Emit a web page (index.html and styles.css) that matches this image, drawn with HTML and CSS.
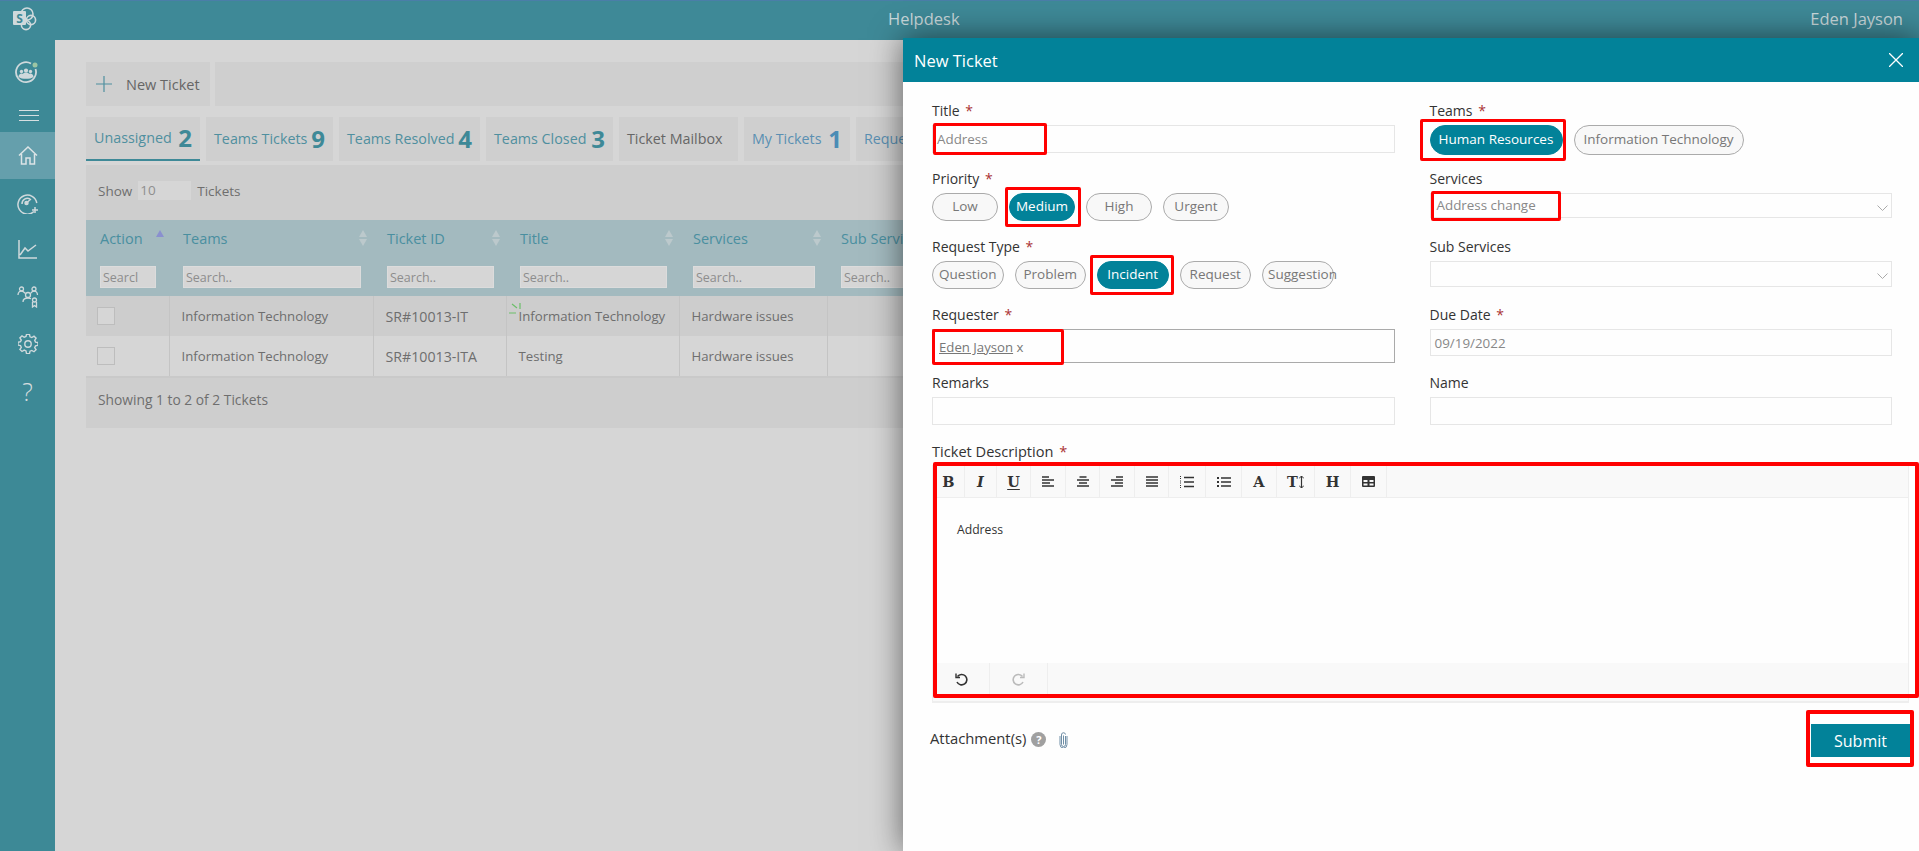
FILE: index.html
```html
<!DOCTYPE html>
<html lang="en">
<head>
  <meta charset="UTF-8" />
  <title>Helpdesk</title>
  <link rel="stylesheet" href="styles.css">
</head>
<body>
  <header class="topbar">
    <svg class="logo" width="26" height="26" viewBox="0 0 26 26">
      <circle cx="16" cy="8" r="6" fill="none" stroke="#cfd9dc" stroke-width="1.6"/>
      <circle cx="20" cy="14" r="4.6" fill="none" stroke="#cfd9dc" stroke-width="1.6"/>
      <circle cx="15" cy="19" r="4.6" fill="none" stroke="#cfd9dc" stroke-width="1.6"/>
      <rect x="2" y="5" width="13" height="14" rx="1" fill="#cfd9dc"/>
      <text x="8.5" y="16.5" class="logo-s">S</text>
    </svg>
    <div class="app-name">Helpdesk</div>
    <div class="user-name">Eden Jayson</div>
  </header>

  <div class="shell">
    <nav class="sidebar">
      <div class="side-item side-team">
        <svg width="24" height="24" viewBox="0 0 24 24" fill="none" stroke="#cfd9dc">
          <path d="M17 2.500A10 10 0 1 0 21.500 8" stroke-width="1.800"/>
          <g fill="#cfd9dc" stroke="none">
            <circle cx="7.500" cy="10.500" r="1.700"/>
            <circle cx="16.500" cy="10.500" r="1.700"/>
            <circle cx="12" cy="9.500" r="2.100"/>
            <path d="M4.500 16c0-2.300 1.500-3.500 3-3.500.6 0 1 .1 1.400.4.7-.8 1.800-1.300 3.100-1.300s2.400.5 3.100 1.300c.4-.3.8-.4 1.400-.4 1.500 0 3 1.200 3 3.500-1.700 1.300-4.500 1.800-7.500 1.800s-5.800-.5-7.500-1.800z"/>
          </g>
          <circle cx="21" cy="4" r="2.500" fill="#9cc6a4" stroke="none"/>
        </svg>
      </div>
      <div class="side-item side-menu">
        <svg width="20" height="11" viewBox="0 0 20 11" stroke="#d6dfe1"><path d="M0 .5h20M0 5.500h20M0 10.500h20"/></svg>
      </div>
      <div class="side-item active">
        <svg width="20" height="19" viewBox="0 0 20 19" fill="none" stroke="#dce4e6" stroke-width="1.500"><path d="M1 9.500 10 1l9 8.500M3.500 8v10h4.500v-6h4v6h4.500V8"/></svg>
      </div>
      <div class="side-item">
        <svg width="22" height="22" viewBox="0 0 22 22" fill="none" stroke="#cfd9dc" stroke-width="1.500">
          <path d="M17 19.500A9.500 9.500 0 1 1 19.800 11"/>
          <path d="M5 12a5.500 5.500 0 0 1 8-5"/>
          <circle cx="9.500" cy="11" r="1.500" fill="#cfd9dc"/>
          <path d="M10.500 10 14 7M18 15v6M15 18h6"/>
        </svg>
      </div>
      <div class="side-item">
        <svg width="20" height="19" viewBox="0 0 20 19" fill="none" stroke="#cfd9dc" stroke-width="1.500"><path d="M1 0v18h18M2 15l5-7 3 3 8-6"/></svg>
      </div>
      <div class="side-item">
        <svg width="22" height="22" viewBox="0 0 22 22" fill="none" stroke="#cfd9dc" stroke-width="1.300">
          <circle cx="4.500" cy="3" r="2"/><circle cx="17" cy="3" r="2"/><circle cx="11" cy="9" r="2.500"/><circle cx="17.500" cy="14" r="2"/>
          <path d="M1 9c0-3 2-4 3.500-4S7 6 8.500 7.500M20.500 9c0-3-2-4-3.500-4s-2.500 1-3.500 2.500M6 16c0-2.500 2-4 5-4 1 0 2 .2 3 .8M15.500 16v5l2-1.500 2 1.500v-5"/>
        </svg>
      </div>
      <div class="side-item">
        <svg width="20" height="20" viewBox="0 0 20 20" fill="none" stroke="#cfd9dc" stroke-width="1.400">
          <circle cx="10" cy="10" r="3.200"/>
          <path d="M8.500 1h3l.5 2.500 1.800.8L16 2.900l2.100 2.100-1.400 2.200.8 1.800 2.500.5v3l-2.500.5-.8 1.800 1.400 2.200-2.100 2.100-2.200-1.400-1.800.8-.5 2.500h-3L8 18.200l-1.800-.8L4 18.800 1.900 16.700l1.400-2.200-.8-1.800L0 12.200v-3l2.500-.5.800-1.800L1.900 4.700 4 2.600l2.200 1.400L8 3.200z" transform="translate(0 -.6) scale(1 .96)"/>
        </svg>
      </div>
      <div class="side-item side-help">?</div>
    </nav>

    <main class="content">
      <div class="toolbar">
        <div class="new-btn">
          <svg width="16" height="16" viewBox="0 0 16 16" stroke="#4f8f9f" stroke-width="1.200"><path d="M8 0v16M0 8h16"/></svg>
          New Ticket
        </div>
        <div class="toolbar-rest"></div>
      </div>

      <div class="tabs">
        <div class="tab tab-active">Unassigned <b>2</b></div>
        <div class="tab">Teams Tickets <b>9</b></div>
        <div class="tab">Teams Resolved <b>4</b></div>
        <div class="tab">Teams Closed <b>3</b></div>
        <div class="tab tab-plain">Ticket Mailbox</div>
        <div class="tab tab-blue">My Tickets <b>1</b></div>
        <div class="tab tab-blue">Requests <b>0</b></div>
      </div>

      <section class="card">
        <div class="show-row">Show <span class="show-box">10</span> Tickets</div>
        <table class="grid">
          <colgroup>
            <col class="col-action"><col class="col-teams"><col class="col-id"><col class="col-title"><col class="col-services"><col class="col-sub">
          </colgroup>
          <thead>
            <tr class="head-row">
              <th><span class="th-in">Action <i class="sort-asc"></i></span></th>
              <th><span class="th-in">Teams <i class="sort"></i></span></th>
              <th><span class="th-in">Ticket ID <i class="sort"></i></span></th>
              <th><span class="th-in">Title <i class="sort"></i></span></th>
              <th><span class="th-in">Services <i class="sort"></i></span></th>
              <th><span class="th-in">Sub Services <i class="sort"></i></span></th>
            </tr>
            <tr class="search-row">
              <th><span class="search">Searcl</span></th>
              <th><span class="search">Search..</span></th>
              <th><span class="search">Search..</span></th>
              <th><span class="search">Search..</span></th>
              <th><span class="search">Search..</span></th>
              <th><span class="search">Search..</span></th>
            </tr>
          </thead>
          <tbody>
            <tr class="odd">
              <td><span class="check"></span></td>
              <td>Information Technology</td>
              <td class="id-cell">SR#10013-IT</td>
              <td class="new-cell">
                <svg class="new-mark" width="12" height="12" viewBox="0 0 12 12" stroke="#6cbf6a" stroke-width="1.200"><path d="M11 0v6M3 1l5 4M0 10h7"/></svg>
                Information Technology
              </td>
              <td>Hardware issues</td>
              <td></td>
            </tr>
            <tr>
              <td><span class="check"></span></td>
              <td>Information Technology</td>
              <td class="id-cell">SR#10013-ITA</td>
              <td>Testing</td>
              <td>Hardware issues</td>
              <td></td>
            </tr>
          </tbody>
        </table>
        <div class="grid-foot">Showing 1 to 2 of 2 Tickets</div>
      </section>
    </main>
  </div>

  <aside class="panel">
    <div class="panel-head">
      <span>New Ticket</span>
      <svg width="14" height="14" viewBox="0 0 14 14" stroke="#fff" stroke-width="1.300"><path d="M0 0l14 14M14 0 0 14"/></svg>
    </div>

    <form class="form">
      <div class="fields">
        <div class="field">
          <label>Title <em>*</em></label>
          <div class="input">Address</div>
        </div>
        <div class="field">
          <label>Priority <em>*</em></label>
          <div class="pills">
            <span class="pill pill-p">Low</span>
            <span class="pill pill-p on">Medium</span>
            <span class="pill pill-p">High</span>
            <span class="pill pill-p">Urgent</span>
          </div>
        </div>
        <div class="field">
          <label>Request Type <em>*</em></label>
          <div class="pills">
            <span class="pill pill-r">Question</span>
            <span class="pill pill-r">Problem</span>
            <span class="pill pill-r on">Incident</span>
            <span class="pill pill-r">Request</span>
            <span class="pill pill-r">Suggestion</span>
          </div>
        </div>
        <div class="field">
          <label>Requester <em>*</em></label>
          <div class="input input-people"><u>Eden Jayson</u>&nbsp;x</div>
        </div>
        <div class="field">
          <label>Remarks</label>
          <div class="input input-low"></div>
        </div>

        <div class="field">
          <label>Teams <em>*</em></label>
          <div class="pills">
            <span class="pill pill-t on">Human Resources</span>
            <span class="pill pill-t">Information Technology</span>
          </div>
        </div>
        <div class="field">
          <label>Services</label>
          <div class="input input-select">Address change
            <svg width="11" height="6" viewBox="0 0 11 6" fill="none" stroke="#aaa"><path d="M.5.5l5 5 5-5"/></svg>
          </div>
        </div>
        <div class="field">
          <label>Sub Services</label>
          <div class="input input-select input-sub">
            <svg width="11" height="6" viewBox="0 0 11 6" fill="none" stroke="#aaa"><path d="M.5.5l5 5 5-5"/></svg>
          </div>
        </div>
        <div class="field">
          <label>Due Date <em>*</em></label>
          <div class="input input-date">09/19/2022</div>
        </div>
        <div class="field">
          <label>Name</label>
          <div class="input input-low"></div>
        </div>
      </div>

      <label class="desc-label">Ticket Description <em>*</em></label>
      <div class="editor">
        <div class="ed-tools">
          <span class="tool glyph">B</span>
          <span class="tool glyph glyph-i">I</span>
          <span class="tool glyph glyph-u">U</span>
          <span class="tool"><svg width="12" height="11" viewBox="0 0 12 11" stroke="#333" stroke-width="1.400"><path d="M0 1h7M0 4h12M0 7h8M0 10h12"/></svg></span>
          <span class="tool"><svg width="12" height="11" viewBox="0 0 12 11" stroke="#333" stroke-width="1.400"><path d="M2.500 1h7M0 4h12M2 7h8M0 10h12"/></svg></span>
          <span class="tool"><svg width="12" height="11" viewBox="0 0 12 11" stroke="#333" stroke-width="1.400"><path d="M5 1h7M0 4h12M4 7h8M0 10h12"/></svg></span>
          <span class="tool"><svg width="12" height="11" viewBox="0 0 12 11" stroke="#333" stroke-width="1.400"><path d="M0 1h12M0 4h12M0 7h12M0 10h12"/></svg></span>
          <span class="tool"><svg width="14" height="12" viewBox="0 0 14 12" stroke="#333"><path d="M4 1.500h10M4 6h10M4 10.500h10" stroke-width="1.600"/><path d="M.5 0v3M.5 4.500v3M.5 9v3" stroke-width="1" stroke-dasharray="1 1"/></svg></span>
          <span class="tool"><svg width="14" height="10" viewBox="0 0 14 10" stroke="#333"><path d="M4 1h10M4 5h10M4 9h10" stroke-width="1.600"/><path d="M0 1h2M0 5h2M0 9h2" stroke-width="2"/></svg></span>
          <span class="tool glyph">A</span>
          <span class="tool glyph glyph-t">T<svg width="5" height="12" viewBox="0 0 5 12" stroke="#333"><path d="M2.500 0v12" stroke-width="1.200"/><path d="M0 2.500 2.500 0 5 2.500M0 9.500 2.500 12 5 9.500" fill="none"/></svg></span>
          <span class="tool glyph">H</span>
          <span class="tool"><svg width="13" height="11" viewBox="0 0 13 11"><path d="M1 0h11a1 1 0 0 1 1 1v9a1 1 0 0 1-1 1H1a1 1 0 0 1-1-1V1a1 1 0 0 1 1-1zm.5 4v2h4V4zm6 0v2h4V4zm-6 3.500V9.500h4v-2zm6 0V9.500h4v-2z" fill="#333" fill-rule="evenodd"/></svg></span>
        </div>
        <div class="ed-body">Address</div>
        <div class="ed-foot">
          <span class="tool"><svg width="13" height="13" viewBox="0 0 13 13" fill="none" stroke="#333" stroke-width="1.600"><path d="M2.500 3.500A5.200 5.200 0 1 1 2 9"/><path d="M1 .5v4h4" stroke-width="1.400"/></svg></span>
          <span class="tool"><svg width="13" height="13" viewBox="0 0 13 13" fill="none" stroke="#bbb" stroke-width="1.600"><path d="M10.500 3.500A5.200 5.200 0 1 0 11 9"/><path d="M12 .5v4H8" stroke-width="1.400"/></svg></span>
        </div>
      </div>

      <div class="form-foot">
        <div class="attach">
          Attachment(s)
          <span class="help-dot">?</span>
          <svg width="9" height="16" viewBox="0 0 9 16" fill="none" stroke="#6f8ea6" stroke-width="1"><path d="M6.500 4v8.500a2 2 0 0 1-4 0V3a2 2 0 0 1 4-.5M4.500 3.500v9"/><path d="M8 4v8.500a3.500 3.500 0 0 1-7 0V4"/></svg>
        </div>
        <button type="button" class="submit">Submit</button>
      </div>
    </form>

    <div class="mark mark-title"></div>
    <div class="mark mark-medium"></div>
    <div class="mark mark-incident"></div>
    <div class="mark mark-requester"></div>
    <div class="mark mark-teams"></div>
    <div class="mark mark-services"></div>
    <div class="mark mark-editor"></div>
    <div class="mark mark-submit"></div>
  </aside>
</body>
</html>
```

FILE: styles.css
```css
/* Reset & Base */
* {
  margin: 0;
  padding: 0;
  box-sizing: border-box;
}

html, body {
  height: 851px;
  overflow: hidden;
}

body {
  background-color: #d6d6d6;
  color: #666;
  font-family: "Open Sans", sans-serif;
  font-size: 13px;
  position: relative;
}

/* Top bar */
.topbar {
  height: 40px;
  background-color: #3e8997;
  border-top: 1px solid #4a7ea8;
  display: flex;
  align-items: center;
  position: relative;
  color: #c9d8db;
  font-size: 16.500px;
}

.logo {
  margin: -3px 0 0 11px;
}

.logo-s {
  font-family: "Open Sans", sans-serif;
  font-weight: 700;
  font-size: 12px;
  fill: #3e8997;
  text-anchor: middle;
}

.app-name {
  position: absolute;
  left: 888px;
  top: 6px;
}

.user-name {
  margin-left: auto;
  margin-right: 16px;
  margin-top: -5px;
}

.shell {
  display: flex;
  height: 811px;
}

/* Sidebar */
.sidebar {
  width: 55px;
  flex: none;
  background-color: #3d8996;
  display: flex;
  flex-direction: column;
}

.side-item {
  height: 47px;
  display: flex;
  align-items: center;
  justify-content: center;
  color: #d4dcde;
}

.side-team { height: 56px; padding: 10px 4px 0 0; }
.side-menu { height: 36px; padding: 2px 0 0 2px; }
.side-item.active { background-color: #659fac; }
.side-help { font-size: 25px; font-weight: 300; }

/* Main content */
.content {
  flex: 1;
  min-width: 0;
  padding: 22px 0 0 31px;
  overflow: hidden;
}

.toolbar {
  display: flex;
  gap: 5px;
  height: 44px;
}

.new-btn {
  width: 124px;
  flex: none;
  background-color: #cfcfcf;
  display: flex;
  align-items: center;
  gap: 14px;
  padding-left: 10px;
  font-size: 14.500px;
  color: #666;
}

.toolbar-rest {
  flex: 1;
  background-color: #cfcfcf;
}

.tabs {
  display: grid;
  grid-template-columns: 114px 127px 141px 127px 119px 106px 200px;
  gap: 6px;
  margin-top: 11px;
  white-space: nowrap;
  overflow: hidden;
}

.tab {
  height: 44px;
  background-color: #cfcfcf;
  padding: 0 8px 2px;
  display: flex;
  align-items: center;
  justify-content: space-between;
  font-size: 14.300px;
  color: #4f8f9f;
}

.tab b {
  font-size: 24px;
  font-weight: 700;
  color: #3e8997;
}

.tab-active {
  border-bottom: 2px solid #3e8997;
}

.tab-plain { color: #666; }
.tab-blue { color: #5a8fb2; }
.tab-blue b { color: #4a8cb5; }

.card {
  margin-top: 4px;
  background-color: #cecece;
  height: 263px;
}

.show-row {
  height: 55px;
  padding: 16px 0 0 12px;
  display: flex;
  align-items: flex-start;
  gap: 6px;
  line-height: 20px;
  font-size: 13.500px;
  color: #6e6e6e;
}

.show-box {
  width: 53px;
  height: 19px;
  background-color: #d6d6d6;
  padding-left: 2px;
  color: #8f8f8f;
  line-height: 19px;
}

/* Table */
.grid {
  border-collapse: collapse;
  table-layout: fixed;
  width: 941px;
}

.col-action { width: 83px; }
.col-teams { width: 204px; }
.col-id { width: 133px; }
.col-title { width: 173px; }
.col-services { width: 148px; }
.col-sub { width: 200px; }

.head-row, .search-row {
  background-color: #a3babf;
}

.head-row th {
  height: 40px;
  padding-bottom: 4px;
  font-weight: 400;
  text-align: left;
  font-size: 14.500px;
  color: #4a8f9f;
}

.th-in {
  display: flex;
  justify-content: space-between;
  align-items: center;
  padding: 0 6px 0 14px;
}

.sort, .sort-asc {
  display: block;
  position: relative;
  width: 8px;
  height: 16px;
}

.sort::before, .sort::after, .sort-asc::before {
  content: "";
  position: absolute;
  left: 0;
  border-left: 4px solid transparent;
  border-right: 4px solid transparent;
}

.sort::before { top: 0; border-bottom: 7px solid #bcc9cc; }
.sort::after { bottom: 0; border-top: 7px solid #bcc9cc; }
.sort-asc { left: 1px; }
.sort-asc::before { top: 0; border-bottom: 7px solid #8a90cf; }

.search-row th {
  height: 36px;
  vertical-align: top;
  text-align: left;
  padding: 6px 12px 0 14px;
}

.search-row th:first-child { padding-right: 13px; }

.search {
  display: block;
  height: 22px;
  background-color: #d6d6d6;
  border: 1px solid #dcdcdc;
  padding-left: 2px;
  font-size: 12.500px;
  font-weight: 400;
  line-height: 22px;
  color: #8d8d8d;
  overflow: hidden;
  white-space: nowrap;
}

.grid td {
  height: 40px;
  padding: 0 12px;
  border-right: 1px solid #c4c4c4;
  font-size: 13.200px;
  color: #6e6e6e;
  white-space: nowrap;
  background-color: #d6d6d6;
}

.grid .odd td {
  background-color: #cdcdcd;
}

.grid .id-cell {
  font-size: 14.200px;
}

.new-cell {
  position: relative;
}

.new-mark {
  position: absolute;
  left: 2px;
  top: 7px;
}

.check {
  display: block;
  width: 18px;
  height: 18px;
  background-color: #d6d6d6;
  border: 1px solid #bdbdbd;
  margin-left: -1px;
}

.grid-foot {
  border-top: 2px solid #c9c9c9;
  padding: 12px 0 0 12px;
  font-size: 13.800px;
  color: #6e6e6e;
}

/* New ticket panel */
.panel {
  position: absolute;
  left: 903px;
  right: 0;
  top: 38px;
  bottom: 0;
  background-color: #fefefe;
  box-shadow: 0 0 30px rgba(0, 0, 0, 0.55);
}

.panel-head {
  height: 44px;
  background-color: #028299;
  color: #fff;
  font-size: 16.500px;
  display: flex;
  align-items: center;
  justify-content: space-between;
  padding: 0 16px 0 11px;
}

.form {
  padding: 19px 10px 0 29px;
}

.fields {
  display: grid;
  grid-template-columns: 1fr 1fr;
  grid-template-rows: repeat(5, 68px);
  grid-auto-flow: column;
  column-gap: 35px;
  margin-right: 17px;
}

.field label, .desc-label {
  display: block;
  height: 20px;
  line-height: 20px;
  margin-bottom: 4px;
  font-size: 14px;
  color: #333;
}

.desc-label {
  font-size: 14.600px;
}

.field em, .desc-label em {
  margin-left: 2px;
  color: #a33;
  font-style: normal;
}

.input {
  height: 28px;
  border: 1px solid #e6e6e6;
  padding-left: 4px;
  line-height: 26px;
  font-size: 13.400px;
  color: #888;
}

.input-people {
  height: 34px;
  margin-top: 1px;
  border-color: #aaa;
  line-height: 34px;
  padding-left: 6px;
  color: #777;
  font-size: 13.200px;
}

.input-low { margin-top: 1px; }
.input-date { height: 27px; margin-top: 1px; line-height: 27px; }

.input-select {
  height: 25px;
  line-height: 22px;
  padding-left: 6px;
  position: relative;
}

.input-sub { height: 26px; }

.input-select svg {
  position: absolute;
  right: 3px;
  top: 11px;
}

.pills {
  display: flex;
  gap: 11px;
}

.pill {
  height: 28px;
  border: 1px solid #aaa;
  border-radius: 14px;
  background-color: #f8f8f8;
  color: #777;
  font-size: 13.500px;
  line-height: 25px;
  text-align: center;
  white-space: nowrap;
  padding: 0 5px;
}

.pill-p { width: 66px; }
.pill-r { width: 71.500px; }

.pill-t {
  height: 30px;
  border-radius: 15px;
  line-height: 27px;
  padding: 0 8px;
  flex: none;
}

.pill-t.on { width: 133px; padding: 0; }
.pill-t:not(.on) { width: 170px; padding: 0; }

.pill.on {
  background-color: #028299;
  border-color: #028299;
  color: #fff;
}

/* Editor */
.editor {
  height: 238px;
  border: 1px solid #eee;
  border-bottom-width: 2px;
  display: flex;
  flex-direction: column;
}

.ed-tools, .ed-foot {
  display: grid;
  background-color: #f9f9f9;
}

.ed-tools {
  height: 32px;
  grid-template-columns: 32px 32px 34px 35px 34px 35px 34px 37px 36px 35px 38px 36px 36px;
  border-bottom: 1px solid #eee;
}

.ed-foot {
  height: 38px;
  grid-template-columns: 57px 58px;
  padding-bottom: 6px;
}

.tool {
  display: flex;
  align-items: center;
  justify-content: center;
  border-right: 1px solid #eee;
}

.glyph {
  font-family: "DejaVu Serif", serif;
  font-weight: 700;
  font-size: 14.500px;
  color: #333;
}

.glyph-i { font-style: italic; }
.glyph-u { text-decoration: underline; text-underline-offset: 2px; }
.glyph-t { gap: 1px; }

.ed-body {
  flex: 1;
  padding: 23px 0 0 24px;
  font-size: 12.200px;
  line-height: 17px;
  color: #333;
}

.form-foot {
  margin-top: 21px;
  margin-right: -1px;
  height: 33px;
  display: flex;
  align-items: center;
  justify-content: space-between;
}

.attach {
  display: flex;
  align-items: center;
  gap: 5px;
  margin: -6px 0 0 -2px;
  font-size: 14.800px;
  color: #333;
}

.attach svg {
  margin-left: 8px;
  margin-top: 4px;
}

.help-dot {
  width: 15px;
  height: 15px;
  margin-top: 3px;
  border-radius: 50%;
  background-color: #a0a0a0;
  color: #fff;
  font-size: 11px;
  font-weight: 700;
  line-height: 15px;
  text-align: center;
}

.submit {
  width: 99px;
  height: 33px;
  border: none;
  background-color: #028299;
  color: #fff;
  font-family: "Open Sans", sans-serif;
  font-size: 16px;
}

/* Red annotation boxes, measured from the panel corner */
.mark {
  position: absolute;
  border: 3px solid #f00;
  border-radius: 2px;
  pointer-events: none;
}

.mark-title { left: 30px; top: 85px; width: 114px; height: 32px; }
.mark-medium { left: 102px; top: 149px; width: 76px; height: 40px; }
.mark-incident { left: 187px; top: 217px; width: 84px; height: 40px; }
.mark-requester { left: 29px; top: 291px; width: 132px; height: 36px; }
.mark-teams { left: 517px; top: 81px; width: 146px; height: 42px; }
.mark-services { left: 528px; top: 153px; width: 130px; height: 30px; }
.mark-editor { left: 30px; top: 424px; width: 986px; height: 236px; border-width: 4px; }
.mark-submit { left: 903px; top: 672px; width: 108px; height: 57px; border-width: 4px; }
```
